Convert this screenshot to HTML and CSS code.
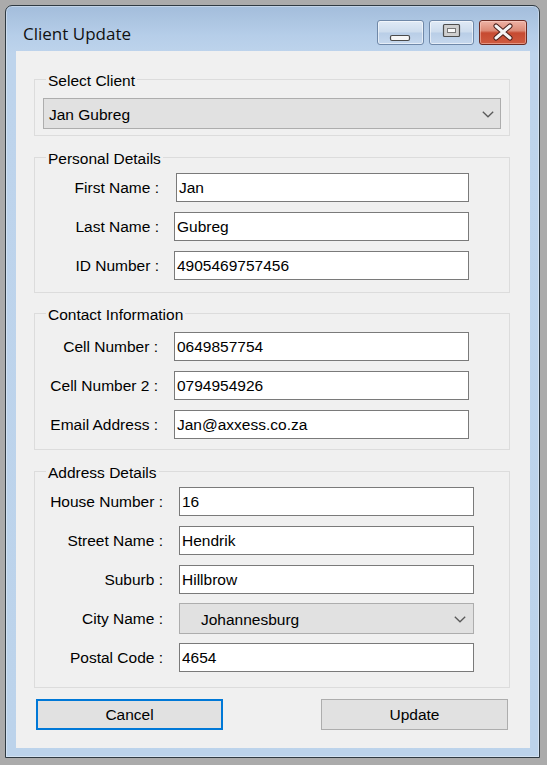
FILE: index.html
```html
<!DOCTYPE html>
<html>
<head>
<meta charset="utf-8">
<title>Client Update</title>
<link rel="stylesheet" href="styles.css">
</head>
<body>
<div class="window">
  <div class="titlebar">
    <div class="title">Client Update</div>
    <div class="tb-buttons">
      <div class="tb-btn tb-min">
        <svg width="47" height="25" viewBox="0 0 47 25"><rect x="13.5" y="15.5" width="19" height="5" rx="1.5" fill="#f6f6f6" stroke="#4a4a4a" stroke-width="1.2"/></svg>
      </div>
      <div class="tb-btn tb-max">
        <svg width="45" height="25" viewBox="0 0 45 25"><rect x="14.5" y="4.5" width="16" height="12" rx="1" fill="#cfcfcf" stroke="#4d4d4d" stroke-width="1.2"/><rect x="18.5" y="8.5" width="8" height="4" fill="#fafafa" stroke="#777" stroke-width="1"/></svg>
      </div>
      <div class="tb-btn tb-close">
        <svg width="48" height="25" viewBox="0 0 48 25"><path d="M17 6 L31 18 M31 6 L17 18" stroke="#4a1f1a" stroke-width="5" stroke-linecap="round" fill="none"/><path d="M17 6 L31 18 M31 6 L17 18" stroke="#f4f4f4" stroke-width="3" stroke-linecap="round" fill="none"/></svg>
      </div>
    </div>
  </div>
  <div class="client">
    <fieldset class="group group-select">
      <legend>Select Client</legend>
      <div class="combo combo-client">
        <span class="combo-text">Jan Gubreg</span>
        <svg class="chev" width="12" height="7" viewBox="0 0 12 7"><path d="M0.8 0.8 L6 5.8 L11.2 0.8" fill="none" stroke="#5a5a5a" stroke-width="1.3"/></svg>
      </div>
    </fieldset>

    <fieldset class="group group-personal">
      <legend>Personal Details</legend>
      <div class="rows rows-personal">
        <div class="lbl">First Name :</div><div class="tbox tbox-shift">Jan</div>
        <div class="lbl">Last Name :</div><div class="tbox">Gubreg</div>
        <div class="lbl">ID Number :</div><div class="tbox">4905469757456</div>
      </div>
    </fieldset>

    <fieldset class="group group-contact">
      <legend>Contact Information</legend>
      <div class="rows rows-contact">
        <div class="lbl">Cell Number :</div><div class="tbox">0649857754</div>
        <div class="lbl">Cell Number 2 :</div><div class="tbox">0794954926</div>
        <div class="lbl">Email Address :</div><div class="tbox">Jan@axxess.co.za</div>
      </div>
    </fieldset>

    <fieldset class="group group-address">
      <legend>Address Details</legend>
      <div class="rows rows-address">
        <div class="lbl">House Number :</div><div class="tbox">16</div>
        <div class="lbl">Street Name :</div><div class="tbox">Hendrik</div>
        <div class="lbl">Suburb :</div><div class="tbox">Hillbrow</div>
        <div class="lbl lbl-city">City Name :</div>
        <div class="combo combo-city">
          <span class="combo-text">Johannesburg</span>
          <svg class="chev" width="12" height="7" viewBox="0 0 12 7"><path d="M0.8 0.8 L6 5.8 L11.2 0.8" fill="none" stroke="#5a5a5a" stroke-width="1.3"/></svg>
        </div>
        <div class="lbl">Postal Code :</div><div class="tbox">4654</div>
      </div>
    </fieldset>

    <div class="actions">
      <div class="btn btn-default">Cancel</div>
      <div class="btn">Update</div>
    </div>
  </div>
</div>
</body>
</html>
```
FILE: styles.css
```css
html, body {
  margin: 0;
  padding: 0;
}
body {
  background: #ababab;
  width: 547px;
  height: 765px;
  overflow: hidden;
  font-family: "Liberation Sans", Arial, sans-serif;
  font-size: 15.5px;
  color: #000;
}
.window {
  margin: 5px 0 0 5px;
  width: 535px;
  height: 753px;
  box-sizing: border-box;
  border: 1px solid #2f3a42;
  border-radius: 7px 7px 0 0;
  background: linear-gradient(180deg, #a3bddb 0px, #b6cee9 30px, #bed4ec 48px, #bcd3eb 100%);
  box-shadow: inset 0 0 0 1px rgba(255, 255, 255, 0.35);
  padding: 0 9px 9px 10px;
  display: flex;
  flex-direction: column;
}
.titlebar {
  height: 45px;
  display: flex;
  align-items: flex-start;
  flex: none;
}
.title {
  font-family: "Open Sans", "Noto Sans", sans-serif;
  font-size: 17px;
  line-height: 20px;
  margin: 18px 0 0 7px;
  color: #111;
}
.tb-buttons {
  margin: 14px 3px 0 auto;
  display: flex;
  gap: 5px;
}
.tb-btn {
  height: 25px;
  box-sizing: border-box;
  border: 1px solid #6f88a8;
  border-radius: 3px;
  background: linear-gradient(180deg, #e0eaf6 0%, #cddced 48%, #b9cee7 52%, #c6d8ed 100%);
  box-shadow: inset 0 0 0 1px rgba(255, 255, 255, 0.55);
  position: relative;
  overflow: hidden;
}
.tb-btn svg {
  position: absolute;
  left: -1px;
  top: -1px;
}
.tb-min { width: 47px; }
.tb-max { width: 45px; }
.tb-close {
  width: 48px;
  border-color: #6a2a22;
  background: linear-gradient(180deg, #eeb3a6 0%, #dc8a76 42%, #c64a31 52%, #cf5b40 100%);
  box-shadow: inset 0 0 0 1px rgba(255, 220, 210, 0.45);
}
.client {
  flex: 1;
  background: #f0f0f0;
  display: flex;
  flex-direction: column;
  padding: 0 20px 0 18px;
}
.group {
  margin: 0;
  padding: 0;
  border: 1px solid #dcdcdc;
  min-width: 0;
}
.group legend {
  margin-left: 11px;
  padding: 4px 2px 0 2px;
  line-height: 16px;
  font-size: 15.5px;
}
.group-select {
  margin-top: 18px;
  padding: 9px 8px 6px 8px;
}
.group-select legend {
  margin-left: 3px;
}
.group-personal {
  margin-top: 11px;
  padding: 6px 0 12px 0;
}
.group-contact {
  margin-top: 10px;
  padding: 9px 0 10px 0;
}
.group-address {
  margin-top: 11px;
  padding: 6px 0 15px 0;
}
.rows {
  display: grid;
  row-gap: 10px;
  align-items: center;
}
.rows-personal {
  grid-template-columns: 124px 295px;
  column-gap: 15px;
}
.rows-contact {
  grid-template-columns: 123px 295px;
  column-gap: 16px;
}
.rows-address {
  grid-template-columns: 128px 295px;
  column-gap: 16px;
}
.lbl {
  text-align: right;
  white-space: nowrap;
  line-height: 26px;
  padding-top: 1px;
}
.tbox {
  height: 29px;
  box-sizing: border-box;
  border: 1px solid #7a7a7a;
  background: #fff;
  line-height: 26px;
  padding: 1px 0 0 2px;
  white-space: nowrap;
}
.tbox-shift {
  margin-left: 2px;
}
.combo {
  box-sizing: border-box;
  border: 1px solid #adadad;
  background: #e1e1e1;
  display: flex;
  align-items: center;
  justify-content: space-between;
}
.combo-client {
  width: 458px;
  height: 31px;
  padding: 0 6px 0 5px;
}
.combo-city {
  height: 31px;
  padding: 0 7px 0 21px;
  margin: -1px 0;
}
.combo-text {
  line-height: 29px;
  padding-top: 1px;
}
.chev {
  flex: none;
  margin-top: 1px;
}
.actions {
  margin-top: 11px;
  padding-left: 2px;
  display: flex;
  justify-content: space-between;
  width: 472px;
}
.btn {
  width: 187px;
  height: 31px;
  box-sizing: border-box;
  border: 1px solid #adadad;
  background: #e1e1e1;
  display: flex;
  align-items: center;
  justify-content: center;
  padding-top: 1px;
}
.btn-default {
  border: 2px solid #0078d7;
}
```
